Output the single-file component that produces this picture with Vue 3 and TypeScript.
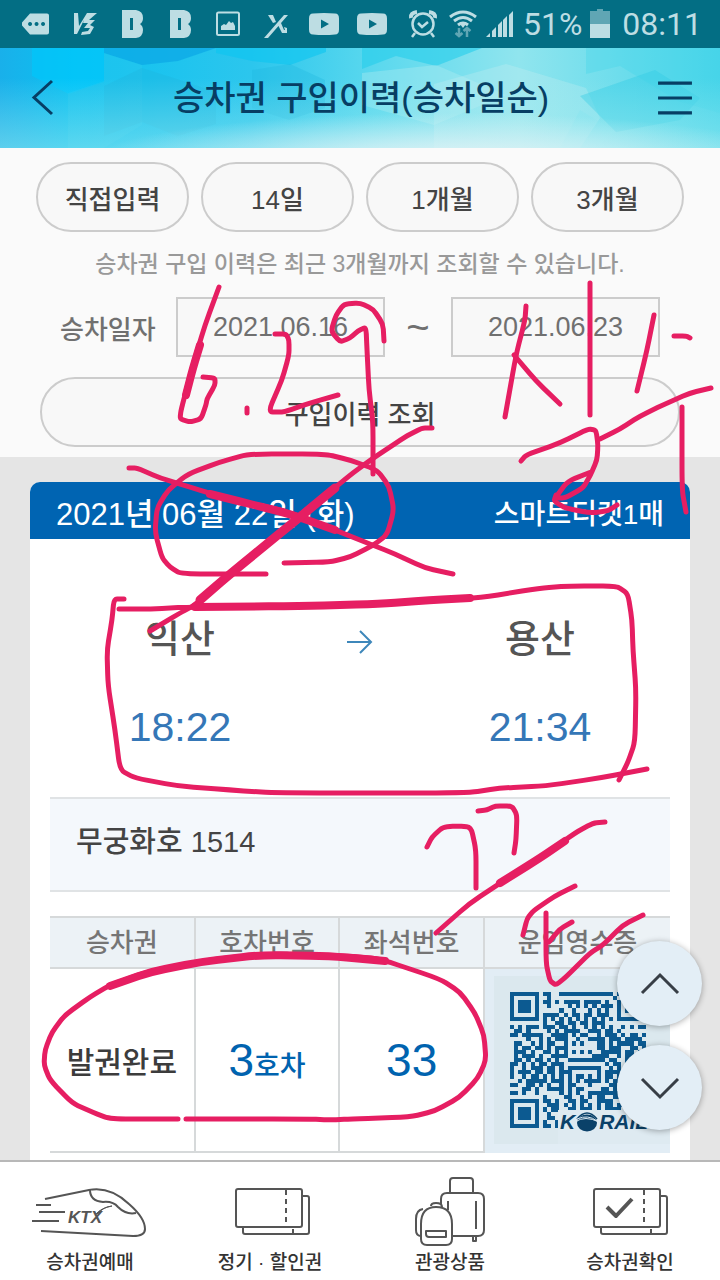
<script setup lang="ts">
import { ref } from 'vue'

type Point = [number, number]
interface Stroke { points: Point[]; width: number }

const periods: string[] = ['직접입력', '14일', '1개월', '3개월']
const dateFrom = ref('2021.06.16')
const dateTo = ref('2021.06.23')

const qrRows: string[] = [
  '#######.##..#############.#######',
  '#.....#..#...............#.#.....',
  '#.###.#.##.#.####.####.#..#.###.#',
  '#.###.#..#....#.#.#.#.###.#.###.#',
  '#.###.#.....#..#...#.#.#..#.###.#',
  '#.....#.####.#.##.##.###..#.....#',
  '#######.#.#.#.#.#.#.#.#.#.#######',
  '........#..##.##.##.###..........',
  '#.#.###.###.##.#..#.#.#.#..#.#.##',
  '.##.#....#.#.####..###.##.#......',
  '##.#####..####.#.##..#.###.#.##.#',
  '....#..#.#.###..#..####.###.####.',
  '.##..#.#.##..#.#.#...##.#.####.##',
  '.#.##.##.#.###.......##.###..##.#',
  '.###.#..##.#.#.#.#.#..#####.##.##',
  '.#.###.#..####......####..#.###.#',
  '.##.#.##.#.#..#########.##..#.#.#',
  '##.#.#.##.###..........#.##.###..',
  '#..#.###.##.#.########..#.#.#.##.',
  '#.###.##.##.###......#.####.##.##',
  '#..#.##.#.#.#.#.##.#.#.##.#.#.#.#',
  '..#.#####.###.#.#.####.#.########',
  '##..##.#.#..#.##...#....##.##.#.#',
  '...##.#..####.#.##....##.#.###.##',
  '##.#..#.....#.#.#..########.##.##',
  '........#....##..#.#.##..##.#.###',
  '#######.##.#..##.##..####..#####.',
  '#.....#..###.#.#.#.#.#.##.##..##.',
  '#.###.#.#.##..##.###.#.####.####.',
  '#.###.#..#.......................',
  '#.###.#..##......................',
  '#.....#.#..#.....................',
  '#######.##.#.....................',
]

const qrPath: string = qrRows
  .map((row, y) => [...row].map((cell, x) => (cell === '#' ? `M${x} ${y}h1v1h-1z` : '')).join(''))
  .join('')

const strokes: Stroke[] = [
  { width: 5, points: [[219, 287], [205, 325], [193, 365], [181, 410], [180, 419], [190, 422], [201, 419], [206, 405], [207, 399], [215, 385], [215, 378], [203, 377]] },
  { width: 8, points: [[200, 345], [193, 368], [186, 395]] },
  { width: 5, points: [[247, 408], [247, 413]] },
  { width: 5, points: [[275, 334], [286, 334], [289, 340], [289, 355], [282, 380], [268, 412], [284, 412], [310, 403], [338, 395]] },
  { width: 5, points: [[384, 341], [383, 324], [373, 309], [360, 303], [344, 304], [336, 315], [331, 331], [340, 342], [350, 338], [358, 331], [366, 327], [367, 350], [369, 390], [373, 422], [373, 474]] },
  { width: 5, points: [[526, 306], [525, 320], [516, 355], [505, 417]] },
  { width: 5, points: [[514, 355], [536, 381], [560, 404]] },
  { width: 5, points: [[590, 283], [590, 415]] },
  { width: 5, points: [[654, 315], [647, 350], [637, 391]] },
  { width: 5, points: [[674, 336], [686, 336], [690, 338]] },
  { width: 5, points: [[711, 388], [690, 393], [665, 404], [640, 416], [620, 429], [600, 439]] },
  { width: 5, points: [[521, 461], [526, 455], [560, 443], [588, 429], [596, 430], [598, 445], [597, 460], [590, 476], [583, 488], [565, 498], [555, 498], [568, 481], [591, 472]] },
  { width: 5, points: [[556, 495], [554, 501], [565, 508], [590, 513], [608, 511], [617, 505]] },
  { width: 5, points: [[682, 407], [682, 490], [686, 512]] },
  { width: 5, points: [[266, 574], [181, 574], [170, 567], [162, 558], [155, 532], [157, 508], [168, 490], [188, 474], [220, 462], [249, 454], [325, 454], [350, 460], [377, 470], [389, 486], [394, 510], [387, 535], [372, 546], [350, 557], [330, 562], [284, 563]] },
  { width: 5, points: [[129, 468], [137, 468], [160, 478], [190, 487], [225, 498], [290, 512], [360, 540], [395, 554], [425, 568], [453, 574]] },
  { width: 8, points: [[210, 494], [250, 504], [290, 514], [335, 530]] },
  { width: 5, points: [[432, 428], [422, 428], [405, 437], [372, 459], [350, 475], [300, 517], [230, 574], [195, 605], [180, 613], [150, 631]] },
  { width: 9, points: [[335, 488], [300, 517], [230, 574], [200, 600]] },
  { width: 5, points: [[124, 599], [114, 599], [112, 620], [107, 650], [108, 685], [115, 730], [120, 770], [135, 778], [178, 786], [230, 790], [275, 793], [468, 793], [500, 788], [545, 786], [600, 778], [647, 769]] },
  { width: 5, points: [[119, 609], [150, 609], [190, 607], [380, 605], [430, 599], [480, 598], [540, 588], [570, 586], [617, 586], [628, 594], [632, 620], [633, 650], [636, 690], [635, 742], [628, 762], [619, 780]] },
  { width: 8, points: [[195, 607], [300, 606], [380, 604], [430, 600], [470, 598]] },
  { width: 5, points: [[427, 847], [432, 837], [443, 827], [457, 826], [471, 827], [476, 850], [476, 888]] },
  { width: 5, points: [[478, 811], [487, 810], [495, 806], [512, 806], [517, 815], [516, 840], [514, 853]] },
  { width: 5, points: [[605, 822], [593, 823], [575, 833], [540, 858], [505, 880], [470, 903], [436, 933]] },
  { width: 8, points: [[565, 841], [540, 858], [500, 883]] },
  { width: 5, points: [[575, 886], [555, 896], [533, 911], [527, 919], [523, 935]] },
  { width: 5, points: [[546, 913], [546, 963], [550, 981], [556, 985], [566, 977], [590, 953], [603, 945], [623, 925], [643, 915]] },
  { width: 5, points: [[549, 942], [560, 929], [572, 922]] },
  { width: 5, points: [[178, 1119], [110, 1119], [92, 1112], [72, 1103], [50, 1080], [44, 1065], [45, 1050], [52, 1032], [65, 1015], [90, 997], [110, 985], [150, 971], [215, 959], [270, 954], [350, 956], [380, 959], [440, 979], [460, 992], [475, 1013], [484, 1035], [486, 1060], [478, 1078], [460, 1097], [435, 1111], [410, 1117], [350, 1119], [330, 1120], [310, 1119], [186, 1119]] },
  { width: 8, points: [[110, 986], [150, 972], [200, 962], [260, 955], [330, 956], [385, 961]] },
]

/* Joins the points with straight runs and softens each corner a little. */
function strokePath(points: Point[]): string {
  const reach = 0.3
  let d = `M${points[0][0]} ${points[0][1]}`
  for (let i = 1; i < points.length - 1; i++) {
    const [px, py] = points[i - 1]
    const [x, y] = points[i]
    const [nx, ny] = points[i + 1]
    d += `L${x + (px - x) * reach} ${y + (py - y) * reach}`
    d += `Q${x} ${y} ${x + (nx - x) * reach} ${y + (ny - y) * reach}`
  }
  const last = points[points.length - 1]
  return `${d}L${last[0]} ${last[1]}`
}
</script>

<template>
  <div class="app">
    <div class="status">
      <div class="status-icons">
        <svg class="slot" viewBox="0 0 48 48"><path fill="currentColor" fill-rule="evenodd" d="M18 13.500h17a2 2 0 0 1 2 2v17a2 2 0 0 1-2 2H18L10 25.500V22.500ZM18 22a2 2 0 1 0 .1 0ZM24.500 22a2 2 0 1 0 .1 0ZM31 22a2 2 0 1 0 .1 0Z" /></svg>
        <svg class="slot" viewBox="0 0 48 48"><path fill="currentColor" d="M14 13h4l1 13 8-13h10l-8 7 6 0-5 5 4 2-4 7-9 1 1-3 6-1 2-3h-6l4-5-5 0 1-3-7 14h-3Z" /></svg>
        <svg v-for="n in 2" :key="n" class="slot" viewBox="0 0 48 48"><path fill="currentColor" fill-rule="evenodd" d="M14 10h14q7 1 7 8 0 4-3 6 3 2 3 6 0 7-7 8H14ZM22 18v12h3V18Z" /></svg>
        <svg class="slot" viewBox="0 0 48 48"><rect x="13" y="12.500" width="22" height="22.500" rx="1.500" fill="none" stroke="currentColor" stroke-width="2" /><path fill="currentColor" d="M17 30v-4l3-2 2 1 3-4 2 2 2-1 2 4v4Z" /></svg>
        <svg class="slot" viewBox="0 0 48 48"><path fill="currentColor" d="M16 15h5l3 7-3 1ZM32 15h4L16 38h-4ZM26 25l3-2 3 7h1l-1-3 3 1v5h-5Z" /></svg>
        <svg v-for="n in 2" :key="`v${n}`" class="slot" viewBox="0 0 48 48"><path fill="currentColor" fill-rule="evenodd" d="M13 13.500q11-1 22 0 4 0 4 5v11q0 5-4 5-11 1-22 0-4 0-4-5v-11q0-5 4-5ZM21 19.500v9l8-4.500Z" /></svg>
      </div>
      <div class="status-icons">
        <svg class="slot narrow" viewBox="0 0 40 48" fill="none" stroke="currentColor" stroke-width="2.500"><circle cx="20" cy="24" r="10.500" /><path d="m15 23 4 4 6-5M12 33l-3 4M28 33l3 4" /><path d="M8 18q-1-5 6-6M32 18q1-5-6-6" stroke-width="4" /></svg>
        <svg class="slot narrow" viewBox="0 0 40 48" fill="none" stroke="currentColor" stroke-width="3"><path d="M7 17q13-10 26 0M11 21q9-7 18 0M15 25q5-4 10 0" /><path d="M17 24h6l-3 4Z" fill="currentColor" stroke="none" /><path d="M16 28v7M24 37v-8M12.500 33l3.500 3 3.500-3M20.500 31l3.500-3 3.500 3" opacity=".5" stroke-width="2.500" /></svg>
        <svg class="slot narrow" viewBox="0 0 40 48" fill="currentColor"><path d="M3 37l4-4v4ZM9 31l4-4v10H9ZM15 25l4-4v16h-4ZM20 20l4-4v21h-4ZM26 15l4-4v26h-4Z" /></svg>
        <span class="status-text">51%</span>
        <svg class="battery" viewBox="0 0 20 48" fill="currentColor"><path d="M0 11h7V9h6v2h7v13H0Z" opacity=".5" /><path d="M0 24h20v14H0Z" /></svg>
        <span class="status-text">08:11</span>
      </div>
    </div>

    <header class="header">
      <svg class="header-art" viewBox="0 0 720 100" preserveAspectRatio="none">
        <defs>
          <linearGradient id="sky" x1="0" y1="0" x2="1" y2="0">
            <stop offset="0" stop-color="#19b0ea" /><stop offset=".1" stop-color="#0dc1f0" /><stop offset=".35" stop-color="#2cc6ed" /><stop offset=".52" stop-color="#5ad8ee" /><stop offset=".72" stop-color="#90e5ee" /><stop offset="1" stop-color="#4bd5ea" />
          </linearGradient>
          <radialGradient id="mist" cx=".62" cy="1.15" r=".5" gradientTransform="translate(0 0)">
            <stop offset="0" stop-color="#ecf4f6" stop-opacity=".95" /><stop offset=".4" stop-color="#e4f3f6" stop-opacity=".65" /><stop offset="1" stop-color="#e4f3f6" stop-opacity="0" />
          </radialGradient>
          <linearGradient id="haze" x1="0" y1="0" x2="0" y2="1">
            <stop offset=".3" stop-color="#a0ecf0" stop-opacity="0" /><stop offset="1" stop-color="#a0ecf0" stop-opacity=".5" />
          </linearGradient>
        </defs>
        <rect width="720" height="100" fill="url(#sky)" />
        <path d="M32 0h72v34l-35 12-37-18Z" fill="#00c6fb" opacity=".7" />
        <path d="M104 0h112l-38 13-36 4-38-12Z" fill="#0ba6e6" opacity=".7" />
        <path d="M104 5 142 17v60l-38 23H68V45l36-12Z" fill="#42cbea" opacity=".2" />
        <path d="m142 20 38 12 36 12v32l-38 12-36-14-38 14V38Z" fill="#20b4dc" opacity=".35" />
        <path d="M216 0h110v4l-36 13-38-4-36-8Z" fill="#0bc5f0" opacity=".6" />
        <path d="m252 22 38-6 35 16v28l-36 12-37-12Z" fill="#1fb8e0" opacity=".35" />
        <path d="M362 0h120l-46 18-40-10-34 13Z" fill="#25cdeb" opacity=".6" />
        <path d="m362 25 74-8 70 30-72 30-72-20Z" fill="#b7edf2" opacity=".35" />
        <path d="m434 36 72-20 80 24 14 30-20 30H434Z" fill="#c9eff2" opacity=".3" />
        <path d="M586 0h134v65l-42-12-58-35-34 8Z" fill="#3dd3e9" opacity=".3" />
        <path d="m580 48 75-26 45 28-20 22-64 12Z" fill="#38cde6" opacity=".5" />
        <path d="m580 62 36 22-22 16h-34Z" fill="#77e0ed" opacity=".3" />
        <rect width="720" height="100" fill="url(#haze)" />
        <rect width="720" height="100" fill="url(#mist)" />
      </svg>
      <button class="icon-button" type="button" aria-label="뒤로"><svg viewBox="0 0 24 38"><path d="M22 2 4 18.500 22 35" /></svg></button>
      <h1>승차권 구입이력(승차일순)</h1>
      <button class="icon-button menu" type="button" aria-label="메뉴"><svg viewBox="0 0 32 34"><path d="M0 3h32M0 17h32M0 31h32" /></svg></button>
    </header>

    <main class="content">
      <section class="filter">
        <div class="periods">
          <button v-for="period in periods" :key="period" class="pill" type="button">{{ period }}</button>
        </div>
        <p class="note">승차권 구입 이력은 최근 3개월까지 조회할 수 있습니다.</p>
        <div class="range">
          <label for="date-from">승차일자</label>
          <input id="date-from" v-model="dateFrom" type="text">
          <span class="tilde">~</span>
          <input id="date-to" v-model="dateTo" type="text" aria-label="승차일자 종료일">
        </div>
        <button class="pill search" type="button">구입이력 조회</button>
      </section>

      <article class="ticket">
        <div class="ticket-head"><span class="ticket-date">2021년 06월 22일 (화)</span><span>스마트티켓1매</span></div>
        <div class="journey">
          <div class="stop"><strong>익산</strong><time>18:22</time></div>
          <svg class="arrow" viewBox="0 0 26 24"><path d="M0 12h24M13 1l11 11-11 11" /></svg>
          <div class="stop"><strong>용산</strong><time>21:34</time></div>
        </div>
        <p class="train">무궁화호 1514</p>
        <table>
          <thead><tr><th>승차권</th><th>호차번호</th><th>좌석번호</th><th class="receipt">운임영수증</th></tr></thead>
          <tbody>
            <tr>
              <td class="state">발권완료</td>
              <td class="seat">3<small>호차</small></td>
              <td class="seat">33</td>
              <td class="qr-cell">
                <div class="qr">
                  <svg viewBox="0 0 33 33" shape-rendering="crispEdges"><path :d="qrPath" fill="#0c5a91" /></svg>
                  <div class="korail">
                    <span>K</span>
                    <svg viewBox="0 0 24 22"><ellipse cx="12" cy="13" rx="10" ry="8.500" fill="#0a4169" /><path d="M2 9Q12-3 22 9" fill="none" stroke="#0a4169" stroke-width="1.500" /><path d="M0 12q10-7 24 0M2 9q11-5 20 2" fill="none" stroke="#deeaf1" stroke-width="1" /></svg>
                    <span>RAIL</span>
                  </div>
                </div>
              </td>
            </tr>
          </tbody>
        </table>
      </article>
    </main>

    <nav class="tabs">
      <a href="#booking">
        <svg viewBox="2 0 120 72"><path d="M17 23 61 14Q82 10 101 28q16 14 16 25 0 7-12 7L13 55" /><path d="M62 14q0 11 13 12 10-1 15 5 8 8 18 6M8 29h15M11 36h26M4 45h27" /><text x="40" y="47">KTX</text><path d="M68 38q5-6 16-8-9 1-13 7Z" fill="#555" stroke-width="1" /></svg>
        <span>승차권예매</span>
      </a>
      <a href="#pass">
        <svg viewBox="6 0 120 72"><path d="M97 20h6q2 0 2 2v34q0 2-2 2H41q-2 0-2-2v-5" /><rect x="32" y="13" width="66" height="38" rx="2" /><path d="M82 14v37M89 53v5" stroke-dasharray="5 4" /></svg>
        <span>정기 · 할인권</span>
      </a>
      <a href="#tour">
        <svg viewBox="0 0 120 72"><path d="M60 17V5q0-3 3-3h17q3 0 3 3v12M51 31V23q0-6 6-6h31q6 0 6 6v31q0 6-6 6H63M58 25v9M86 25v28M83 61v4h3v-4" /><path d="M30 60q-4-1-4-6V43q0-9 7-10M41 30q0-3 5-3 6 0 6 4M31 48q0-17 15-17 16 0 16 17v15q0 6-6 6H37q-6 0-6-6ZM36 55h20v6H39q-3 0-3-3Z" /></svg>
        <span>관광상품</span>
      </a>
      <a href="#tickets">
        <svg viewBox="6 0 120 72"><path d="M95 20h6q2 0 2 2v34q0 2-2 2H39q-2 0-2-2v-5" /><rect x="30" y="13" width="66" height="38" rx="2" /><path d="M80 14v37M87 53v5" stroke-dasharray="5 4" /><path d="m43 31 9 9 16-17" stroke-width="4" /></svg>
        <span>승차권확인</span>
      </a>
    </nav>

    <div class="jump">
      <button type="button" aria-label="위로"><svg viewBox="0 0 38 20"><path d="M1 19 19 1l18 18" /></svg></button>
      <button type="button" aria-label="아래로"><svg viewBox="0 0 38 20"><path d="m1 1 18 18L37 1" /></svg></button>
    </div>

    <svg class="ink" viewBox="0 0 720 1280" aria-hidden="true">
      <path v-for="(stroke, i) in strokes" :key="i" :d="strokePath(stroke.points)" :stroke-width="stroke.width" />
    </svg>
  </div>
</template>

<style>
body { margin: 0; }
</style>

<style scoped>
* { box-sizing: border-box; }
.app {
  position: relative;
  display: flex;
  flex-direction: column;
  height: 100vh;
  overflow: hidden;
  background: #e5e5e5;
  color: #444;
  font-family: "Liberation Sans", "Noto Sans CJK KR", sans-serif;
  font-weight: 500;
}
button, input { font: inherit; color: inherit; }
button { cursor: pointer; }
.status {
  display: flex;
  justify-content: space-between;
  flex: none;
  height: 48px;
  padding: 0 18px 0 12px;
  background: #036e84;
  color: #bddde3;
}
.status-icons { display: flex; align-items: center; }
.slot { width: 48px; height: 48px; }
.narrow { width: 40px; }
.battery { width: 20px; height: 48px; margin: 0 12px 0 8px; }
.status-text { font: 400 32px/48px Roboto, sans-serif; }
.header {
  position: relative;
  display: flex;
  align-items: center;
  justify-content: space-between;
  flex: none;
  height: 100px;
  padding: 0 28px 0 30px;
  color: #073e64;
}
.header-art { position: absolute; inset: 0; width: 100%; height: 100%; }
h1 { position: relative; margin: 0; font-size: 34px; line-height: 48px; font-weight: 500; }
.icon-button { position: relative; display: flex; width: 34px; padding: 0; border: 0; background: none; }
.icon-button svg { width: 24px; height: 38px; fill: none; stroke: currentColor; stroke-width: 3; }
.icon-button.menu svg { width: 34px; height: 36px; }
.content { flex: 1; display: flex; flex-direction: column; min-height: 0; overflow: auto; scrollbar-width: none; }
.filter { flex: none; padding: 14px 36px 10px; background: #fafafa; }
.periods { display: grid; grid-template-columns: repeat(4, 1fr); gap: 12px; }
.pill {
  height: 70px;
  padding: 0;
  border: 2px solid #ccc;
  border-radius: 35px;
  background: #f8f8f8;
  font-size: 26px;
  font-weight: 500;
}
.note { margin: 14px 0 15px; text-align: center; font-size: 23px; line-height: 36px; color: #999; }
.range { display: flex; align-items: center; padding: 0 24px; margin-bottom: 20px; font-size: 26px; color: #707070; }
.range label { flex: none; width: 116px; }
.range input {
  flex: 1;
  width: 0;
  height: 60px;
  padding: 0;
  border: 2px solid #ccc;
  background: #f8f8f8;
  text-align: center;
  font-size: 27px;
}
.tilde { width: 66px; text-align: center; font-size: 40px; font-weight: 400; line-height: 60px; }
.search { display: block; width: calc(100% - 8px); margin: 0 4px; }
.ticket { flex: 1 0 auto; margin: 25px 30px 0; background: #fff; border-radius: 10px 10px 0 0; overflow: hidden; }
.ticket-head {
  display: flex;
  align-items: center;
  justify-content: space-between;
  height: 57px;
  padding: 2px 26px 0;
  background: #0064b2;
  color: #fff;
  font-size: 28px;
}
.ticket-date { font-size: 31px; }
.journey { display: grid; grid-template-columns: repeat(3, 1fr); justify-items: center; height: 258px; padding: 75px 60px 0; }
.stop { display: flex; flex-direction: column; align-items: center; gap: 38px; }
.stop strong { font-size: 38px; line-height: 50px; font-weight: 500; color: #555; }
.stop time { font-size: 41px; line-height: 50px; color: #3577b7; }
.arrow { width: 26px; height: 24px; margin-top: 16px; fill: none; stroke: #3e87ba; stroke-width: 2; }
.train {
  height: 95px;
  margin: 0 20px 24px;
  padding: 22px 26px;
  border: solid #e0e3e5;
  border-width: 2px 0;
  background: #f4f8fc;
  font-size: 29px;
  line-height: 42px;
}
table { width: calc(100% - 40px); margin: 0 20px; border-collapse: collapse; table-layout: fixed; }
th, td { padding: 0; border: solid #d6d9da; border-width: 2px 2px 2px 0; text-align: center; }
th:last-child, td:last-child { border-right: 0; }
th { height: 51px; background: #ecf2f6; font-size: 26px; line-height: 36px; font-weight: 500; color: #757575; }
.receipt { width: 186px; }
td { height: 184px; }
.state { font-size: 30px; color: #3c3c3c; }
.seat { font-size: 46px; color: #0063af; }
.seat small { font-size: 28px; }
.qr-cell { background: #e2edf5; border-bottom-color: #e2edf5; }
.qr { position: relative; height: 168px; margin: 0 0 0 9px; padding: 16px; background: #dbe8ee; }
.qr > svg { display: block; width: 136px; height: 136px; }
.korail {
  position: absolute;
  left: 64px;
  right: 0;
  bottom: 0;
  display: flex;
  height: 34px;
  padding-left: 2px;
  background: #deeaf1;
  color: #0a4169;
  font: italic 700 21px/24px "Liberation Sans", sans-serif;
}
.korail svg { width: 24px; height: 22px; }
.tabs { flex: none; display: grid; grid-template-columns: repeat(4, 1fr); height: 120px; border-top: 2px solid #b8b8b8; background: #fff; }
.tabs a { display: flex; flex-direction: column; align-items: center; padding-top: 14px; color: #333; text-decoration: none; font-size: 19px; line-height: 30px; font-weight: 500; }
.tabs svg { width: 120px; height: 72px; fill: #fff; stroke: #555; stroke-width: 2; stroke-linejoin: round; }
.tabs text { fill: #555; stroke: none; font: italic 700 17px "Liberation Sans", sans-serif; }
.jump { position: absolute; right: 18px; bottom: 150px; display: grid; gap: 19px; }
.jump button { display: grid; place-items: center; width: 85px; height: 85px; padding: 0; border: 0; border-radius: 50%; background: #e3eef6; box-shadow: 0 1px 6px #0005; }
.jump svg { width: 38px; height: 20px; overflow: visible; fill: none; stroke: #383e46; stroke-width: 3; }
.ink { position: absolute; top: 0; left: 0; width: 100%; pointer-events: none; fill: none; stroke: #e61e62; stroke-linecap: round; stroke-linejoin: round; }
</style>
